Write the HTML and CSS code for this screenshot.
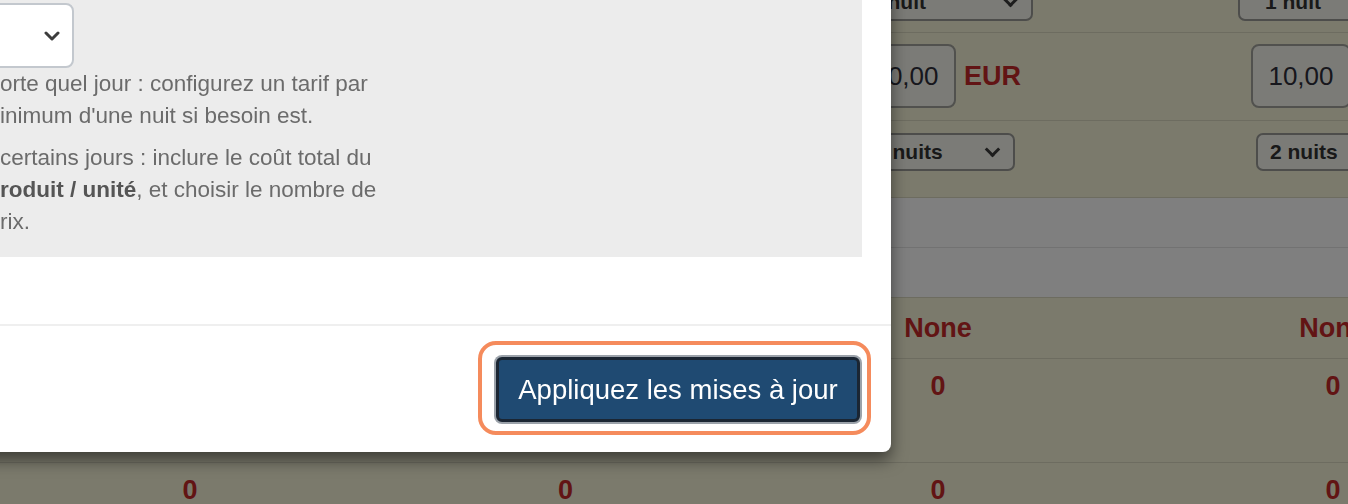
FILE: index.html
```html
<!DOCTYPE html>
<html>
<head>
  <meta charset="UTF-8">
  <title>Tarifs par nuit</title>
  <link rel="stylesheet" href="styles.css">
</head>
<body>
  <div class="sheet">
    <div class="row row-minstay">
      <div class="cell"><div class="select wide">1 nuit<span class="chev"></span></div></div>
      <div class="cell"><div class="select wide">1 nuit<span class="chev"></span></div></div>
      <div class="cell"><div class="select wide">1 nuit<span class="chev"></span></div></div>
      <div class="cell"><div class="select wide">1 nuit<span class="chev"></span></div></div>
    </div>
    <div class="row row-price">
      <div class="cell"><div class="price"><span class="amount">10,00</span><span class="currency">EUR</span></div></div>
      <div class="cell"><div class="price"><span class="amount">10,00</span><span class="currency">EUR</span></div></div>
      <div class="cell"><div class="price"><span class="amount">10,00</span><span class="currency">EUR</span></div></div>
      <div class="cell"><div class="price"><span class="amount">10,00</span><span class="currency">EUR</span></div></div>
    </div>
    <div class="row row-nights">
      <div class="cell"><div class="select small">2 nuits<span class="chev"></span></div></div>
      <div class="cell"><div class="select small">2 nuits<span class="chev"></span></div></div>
      <div class="cell"><div class="select small">2 nuits<span class="chev"></span></div></div>
      <div class="cell"><div class="select small">2 nuits<span class="chev"></span></div></div>
    </div>
    <div class="row row-blank"></div>
    <div class="row row-blank last"></div>
    <div class="row row-value">
      <div class="cell red">None</div>
      <div class="cell red">None</div>
      <div class="cell red">None</div>
      <div class="cell red">None</div>
    </div>
    <div class="row row-count tall">
      <div class="cell red">0</div>
      <div class="cell red">0</div>
      <div class="cell red">0</div>
      <div class="cell red">0</div>
    </div>
    <div class="row row-count">
      <div class="cell red">0</div>
      <div class="cell red">0</div>
      <div class="cell red">0</div>
      <div class="cell red">0</div>
    </div>
  </div>

  <div class="backdrop"></div>

  <div class="modal">
    <div class="modal-body">
      <div class="panel">
        <div class="picker">
          <svg width="16" height="10" viewBox="0 0 16 10"><polyline points="2,2 8,8 14,2" fill="none" stroke="#3d3d3d" stroke-width="3" stroke-linecap="round" stroke-linejoin="round"/></svg>
        </div>
        <div class="help">
          <p>orte quel jour : configurez un tarif par<br>inimum d'une nuit si besoin est.</p>
          <p>certains jours : inclure le coût total du<br><b>roduit / unité</b>, et choisir le nombre de<br>rix.</p>
        </div>
      </div>
    </div>
    <div class="modal-footer">
      <span class="focus-ring">
        <button type="button" class="btn-apply">Appliquez les mises à jour</button>
      </span>
    </div>
  </div>
</body>
</html>
```

FILE: styles.css
```css
body {
  margin: 0;
  overflow: hidden;
  font-family: "Liberation Sans", Arial, sans-serif;
  background-color: #f6f4d9;
  color: #333;
}

/* table behind the dialog */
.sheet {
  width: 1541px;
}

.row {
  display: grid;
  grid-template-columns: 380px 371px 374px 416px;
  border-bottom: 1px solid #dbd8c1;
  box-sizing: border-box;
}

.cell {
  display: flex;
  justify-content: center;
  align-items: flex-start;
}

.row-minstay { height: 33px; }
.row-minstay .cell { align-items: flex-end; padding-bottom: 11px; }

.row-price { height: 88px; }
.row-price .cell { padding-top: 11px; }

.row-nights { height: 77px; }
.row-nights .cell { padding-top: 12px; }

.row-blank {
  height: 50px;
  background: #fefefe;
  border-bottom-color: #e4e4e4;
}
.row-blank.last { height: 50px; border-bottom-color: #dbd8c1; }

.row-value { height: 61px; }
.row-value .cell { align-items: center; }

.row-count { height: 110px; }
.row-count.tall { height: 104px; }
.row-count .cell { padding-top: 12px; line-height: 30px; }

.red {
  color: #c42828;
  font-weight: bold;
  font-size: 27px;
}

.select {
  position: relative;
  box-sizing: border-box;
  height: 38px;
  border: 2px solid #9a9a96;
  border-radius: 7px;
  background: #f7f7ef;
  font-weight: bold;
  font-size: 21px;
  line-height: 34px;
  color: #333;
}

.select.wide {
  width: 190px;
  margin-top: -20px;
  padding-left: 25px;
}

.select.small {
  width: 154px;
  padding-left: 12px;
}

.chev {
  position: absolute;
  right: 15px;
  top: 9px;
  width: 8px;
  height: 8px;
  border-right: 3px solid #3a3a3a;
  border-bottom: 3px solid #3a3a3a;
  transform: rotate(45deg);
}

.price {
  display: flex;
  align-items: center;
  gap: 8px;
}

.amount {
  box-sizing: border-box;
  width: 100px;
  height: 64px;
  border: 2px solid #a2a29c;
  border-radius: 8px;
  background: #f7f7ef;
  font-size: 26px;
  line-height: 60px;
  text-align: center;
  color: #2e2e3a;
}

.currency {
  color: #c42828;
  font-weight: bold;
  font-size: 27px;
  width: 56px;
}

.backdrop {
  position: fixed;
  inset: 0;
  background: rgba(0, 0, 0, 0.5);
}

/* dialog */
.modal {
  position: fixed;
  left: -30px;
  top: -40px;
  width: 921px;
  background: #fff;
  border-radius: 8px;
  box-shadow: 0 8px 16px rgba(0, 0, 0, 0.5);
}

.modal-body {
  padding: 0 29px 67px 10px;
}

.panel {
  background: #ececec;
  padding: 43px 20px 9px 20px;
}

.picker {
  box-sizing: border-box;
  width: 134px;
  height: 65px;
  margin-left: -60px;
  background: #fff;
  border: 2px solid #c3c8ce;
  border-radius: 8px;
  display: flex;
  align-items: center;
  justify-content: flex-end;
  padding-right: 12px;
}

.help {
  font-size: 22.5px;
  line-height: 32px;
  color: #6b6b6b;
}

.help p {
  margin: 0 0 10px;
}

.help b {
  color: #555;
}

.modal-footer {
  border-top: 2px solid #efefef;
  display: flex;
  justify-content: flex-end;
  padding: 15px 20px 17px 0;
}

.focus-ring {
  display: inline-flex;
  border: 4px solid #f58b5c;
  border-radius: 18px;
  padding: 10px 5px 7px 12px;
}

.btn-apply {
  box-sizing: border-box;
  width: 364px;
  height: 65px;
  margin: 2px;
  background: #1f4a72;
  border: 3px solid #1b2633;
  border-radius: 6px;
  box-shadow: 0 0 0 2px #9ba2aa;
  color: #fff;
  font-family: "Liberation Sans", Arial, sans-serif;
  font-size: 27.5px;
  cursor: pointer;
}
```
